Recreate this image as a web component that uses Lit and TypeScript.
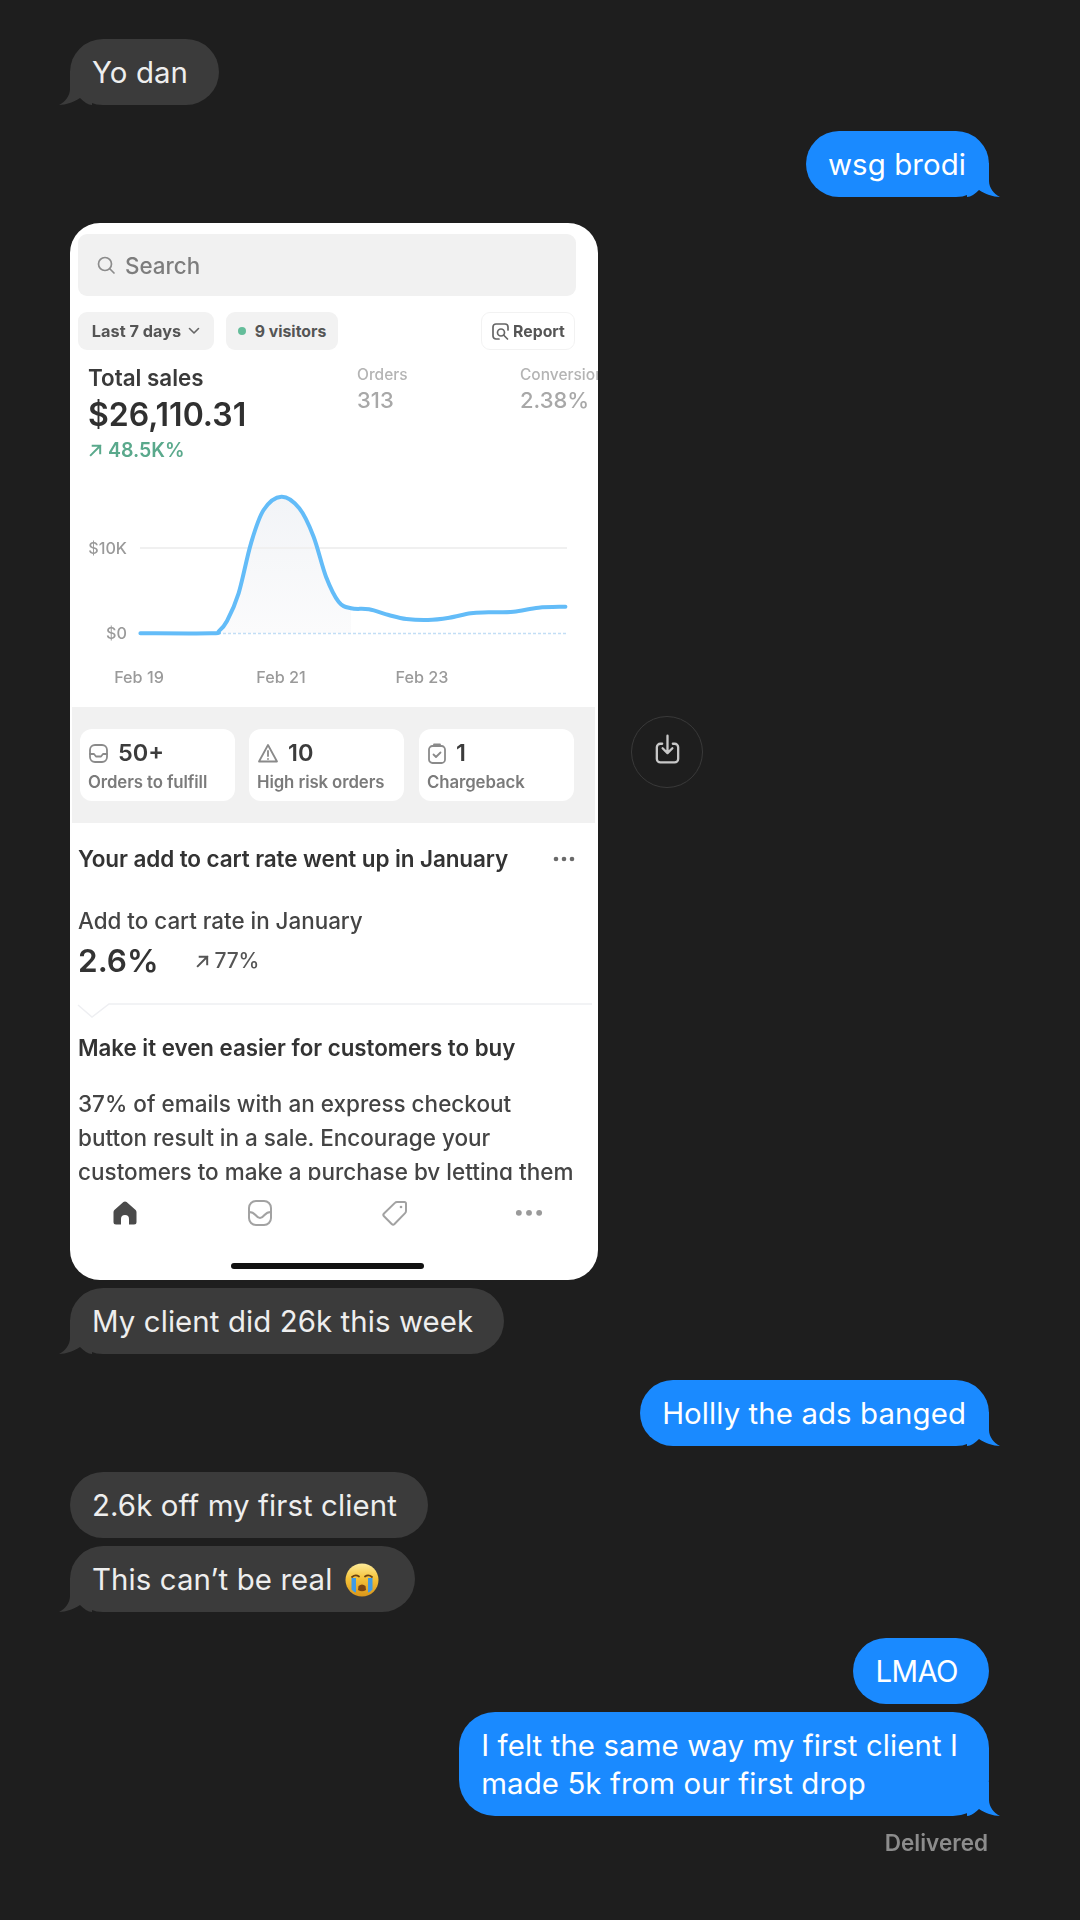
import { LitElement, html, css, svg } from "lit";
import { customElement } from "lit/decorators.js";

const PTS: [number, number][] = [
  [70.4,171.3],[141,171.3],[149,169],[157,159],[168.6,131.3],[181,81.3],[193.6,48],[211.4,34.7],[229.3,46.3],
  [243.6,74.7],[256,114.7],[268.6,139.7],[281,146.3],[299,147.3],[318.6,153],[336.4,157],[357.9,158],
  [379.3,155.7],[400.7,151.3],[418.6,150.3],[443.6,149.7],[468.6,145.7],[495.4,144.7],
];

function smooth(p: [number, number][]): string {
  let d = `M${p[0][0]} ${p[0][1]}`;
  for (let i = 0; i < p.length - 1; i++) {
    const a = p[Math.max(i - 1, 0)], b = p[i], c = p[i + 1], e = p[Math.min(i + 2, p.length - 1)];
    const c1x = b[0] + (c[0] - a[0]) / 6, c1y = b[1] + (c[1] - a[1]) / 6;
    const c2x = c[0] - (e[0] - b[0]) / 6, c2y = c[1] - (e[1] - b[1]) / 6;
    d += ` C${c1x.toFixed(1)} ${c1y.toFixed(1)} ${c2x.toFixed(1)} ${c2y.toFixed(1)} ${c[0]} ${c[1]}`;
  }
  return d;
}

const TAIL = "M11 0V18C11 25 6 31 0 34C7 34 15 31 21 27C25 31 29 34 33 34V0Z";
const tail = html`<svg class="tail" viewBox="0 0 33 34" width="33" height="34"><path d=${TAIL} fill="currentColor"/></svg>`;

const emoji = html`<svg class="emoji" viewBox="0 0 34 34" width="34" height="34">
  <defs><linearGradient id="ey" x1="0" y1="0" x2="0" y2="1"><stop offset="0" stop-color="#fdeb9a"/><stop offset="0.45" stop-color="#f5c33a"/><stop offset="1" stop-color="#d9961a"/></linearGradient></defs>
  <circle cx="17" cy="17" r="16.5" fill="url(#ey)"/>
  <path d="M7 14q3.500-3 7-.5M20 13.500q3.500-2.500 7 .5" fill="none" stroke="#6d4210" stroke-width="1.800" stroke-linecap="round"/>
  <path d="M13.500 23q3.500-3 7 0l.5 4q-4 2.500-8 0z" fill="#7a4512"/>
  <path d="M6.500 15h4.500v14.500q-2.500-.5-4.500-3zM23 15h4.500v11.500q-2 2.500-4.500 3z" fill="#3f9be6"/>
</svg>`;

const ic = {
  search: html`<svg class="i" width="20" height="20" viewBox="0 0 20 20" fill="none" stroke="#8c8c8c" stroke-width="1.700" stroke-linecap="round"><circle cx="9" cy="9" r="6.500"/><path d="M14 14l4 4"/></svg>`,
  chev: html`<svg width="12" height="8" viewBox="0 0 12 8" fill="none" stroke="#666" stroke-width="1.600" stroke-linecap="round" stroke-linejoin="round"><path d="M1.500 1.500L6 6l4.500-4.500"/></svg>`,
  report: html`<svg width="19" height="19" viewBox="0 0 19 19" fill="none" stroke="#666" stroke-width="1.700" stroke-linecap="round"><path d="M8 17H5a3 3 0 0 1-3-3V5a3 3 0 0 1 3-3h9a3 3 0 0 1 3 3v3"/><circle cx="10" cy="10.500" r="3.500"/><path d="M13 13.500l3.500 3.500"/></svg>`,
  up: (c: string, s: number) => html`<svg width=${s} height=${s} viewBox="0 0 16 16" fill="none" stroke=${c} stroke-width="2.100" stroke-linecap="square"><path d="M3 13L13 3M5 3h8v8"/></svg>`,
  inbox: html`<svg width="21" height="21" viewBox="0 0 21 21" fill="none" stroke="#8a8a8a" stroke-width="1.800" stroke-linecap="round" stroke-linejoin="round"><rect x="2" y="2" width="17" height="17" rx="5"/><path d="M2 11h4l2 2.500h5l2-2.500h4"/></svg>`,
  alert: html`<svg width="22" height="21" viewBox="0 0 22 21" fill="none" stroke="#8a8a8a" stroke-width="1.800" stroke-linecap="round" stroke-linejoin="round"><path d="M11 2L20 18.500H2zM11 8v5M11 15.800v.2"/></svg>`,
  clip: html`<svg width="20" height="23" viewBox="0 0 20 23" fill="none" stroke="#8a8a8a" stroke-width="1.800" stroke-linecap="round" stroke-linejoin="round"><rect x="2" y="4" width="16" height="17" rx="3.500"/><path d="M7 4V2.500h6V4M6.500 12.500l2.500 2.500 4.500-4.500"/></svg>`,
  dots: (c: string, w: number) => html`<svg width=${w} height=${w * 6 / 22} viewBox="0 0 22 6" fill=${c}><circle cx="3" cy="3" r="2.300"/><circle cx="11" cy="3" r="2.300"/><circle cx="19" cy="3" r="2.300"/></svg>`,
  home: html`<svg width="28" height="28" viewBox="0 0 28 28"><path d="M14 2.500a2.500 2.500 0 0 0-1.600.6L3.400 11A3 3 0 0 0 2.500 13.200V23a2.500 2.500 0 0 0 2.500 2.500h5V20a4 4 0 0 1 8 0v5.500h5a2.500 2.500 0 0 0 2.500-2.500V13.200a3 3 0 0 0-.9-2.200L15.600 3.100a2.500 2.500 0 0 0-1.600-.6z" fill="#4a4a4a"/></svg>`,
  navInbox: html`<svg width="28" height="28" viewBox="0 0 28 28" fill="none" stroke="#a2a2a2" stroke-width="2" stroke-linecap="round" stroke-linejoin="round"><rect x="3" y="2" width="22" height="24" rx="7"/><path d="M3 13q4 0 6.500 3t4.500 3q2 0 4.500-3t6.500-3"/></svg>`,
  tag: html`<svg width="28" height="28" viewBox="0 0 28 28" fill="none" stroke="#a2a2a2" stroke-width="2" stroke-linejoin="round"><path d="M16 3h7.500A1.500 1.500 0 0 1 25 4.500V12a3 3 0 0 1-.9 2.100L13.500 25a2 2 0 0 1-2.800 0L3 17.300a2 2 0 0 1 0-2.800L13.900 3.900A3 3 0 0 1 16 3z"/><circle cx="20" cy="8" r="1.300" fill="#a2a2a2" stroke="none"/></svg>`,
  save: html`<svg width="28" height="36" viewBox="0 0 28 36" fill="none" stroke="#c8c8c8" stroke-width="2.600" stroke-linecap="round" stroke-linejoin="round"><path d="M8 11H6a4 4 0 0 0-4 4v13a4 4 0 0 0 4 4h16a4 4 0 0 0 4-4V15a4 4 0 0 0-4-4h-2M14 2v19M8.500 16l5.500 5.500 5.500-5.500"/></svg>`,
};

@customElement("app-root")
export class AppRoot extends LitElement {
  static styles = css`
    :host { display: block; width: 1080px; height: 1920px; background: #1e1e1e; overflow: hidden; }
    .page { display: flex; flex-direction: column; padding: 39px 91px 0 70px; font-family: Inter, "Liberation Sans", sans-serif; filter: blur(0.5px); }
    .msg { display: flex; margin-top: 26px; }
    .msg:first-child { margin-top: 0; }
    .msg.tight { margin-top: 8px; }
    .msg.me { justify-content: flex-end; }
    .bubble { position: relative; font-size: 29.4px; letter-spacing: 0.1px; line-height: 38px; font-weight: 400; padding: 15px 31px 13px 22px; border-radius: 33px; background: #3b3b3b; color: #eeeeee; display: flex; align-items: center; box-sizing: border-box; min-height: 66px; white-space: nowrap; }
    .bubble.cry { padding-right: 36px; }
    .me .bubble { background: #1a8aff; color: #fff; padding-right: 23px; }
    .me .bubble.wide { padding-right: 31px; letter-spacing: -0.6px; }
    .me .bubble.multi { padding-right: 31px; border-radius: 36px; }
    .tail { position: absolute; left: -11px; bottom: 0; color: #3b3b3b; }
    .me .tail { left: auto; right: -11px; transform: scaleX(-1); color: #1a8aff; }
    .emoji { margin-left: 13px; }

    .row { display: flex; align-items: center; gap: 33px; margin-top: 26px; }
    .card { width: 528px; height: 1057px; background: #fff; border-radius: 30px; overflow: hidden; color: #303030; filter: blur(0.7px); flex: none; display: flex; flex-direction: column; }
    .save { width: 72px; height: 72px; border-radius: 50%; border: 1.500px solid #3a3a3a; box-sizing: border-box; display: flex; align-items: center; justify-content: center; }
    .save svg { width: 25px; height: 32px; margin-top: -4px; }

    .search { margin: 11px 22px 0 8px; height: 62px; flex: none; background: #f1f1f1; border-radius: 9px; display: flex; align-items: center; gap: 9px; padding-left: 18px; font-size: 22.400px; font-weight: 500; color: #7d7d7d; }
    .chips { display: flex; margin: 16px 23px 0 8px; gap: 12px; height: 38px; flex: none; font-size: 15.800px; font-weight: 700; color: #555; white-space: nowrap; }
    .chip { display: flex; align-items: center; justify-content: center; gap: 7px; background: #f2f2f2; border-radius: 9px; }
    .chip.days { width: 136px; font-size: 16.300px; }
    .chip.vis { width: 112px; gap: 9px; }
    .dot { width: 8px; height: 8px; border-radius: 50%; background: #64bd9a; }
    .chip.report { width: 94px; margin-left: auto; background: #fff; border: 1.500px solid #f2f2f2; box-sizing: border-box; gap: 3px; }
    .stats { display: flex; margin-top: 15px; padding-left: 18px; flex: none; height: 97px; white-space: nowrap; }
    .total { width: 269px; flex: none; }
    .t1 { font-size: 22.400px; line-height: 26px; font-weight: 600; color: #3a3a3a; }
    .t2 { font-size: 32px; line-height: 40px; font-weight: 600; margin-top: 4px; }
    .t3 { font-size: 19.500px; line-height: 24px; font-weight: 600; color: #5aa98c; display: flex; align-items: center; gap: 5px; margin-top: 3px; }
    .side { width: 163px; flex: none; color: #b4b4b4; }
    .s1 { font-size: 15.500px; line-height: 20px; font-weight: 500; }
    .s2 { font-size: 22px; line-height: 26px; font-weight: 500; margin-top: 2px; color: #a8a8a8; }
    .chart { display: block; flex: none; }
    .chart text { font-family: Inter, "Liberation Sans", sans-serif; font-size: 16.200px; fill: #9a9a9a; font-weight: 500; dominant-baseline: central; }

    .band { margin-left: 2px; width: 523px; height: 116px; flex: none; background: #f1f1f1; box-sizing: border-box; padding: 22px 0 0 8px; display: flex; gap: 14px; }
    .tile { width: 155px; height: 72px; background: #fff; border-radius: 12px; box-sizing: border-box; padding: 11px 0 0 8px; }
    .tile.last { margin-left: 1px; }
    .tv { display: flex; align-items: center; gap: 9px; font-size: 23.500px; line-height: 26px; font-weight: 600; color: #3c3c3c; }
    .tl { font-size: 16.800px; line-height: 20px; font-weight: 600; color: #7b7b7b; margin-top: 6px; letter-spacing: -0.1px; white-space: nowrap; }

    .copy { padding-left: 8px; color: #333; white-space: nowrap; }
    .head { display: flex; align-items: center; justify-content: space-between; margin-top: 22px; padding-right: 23px; font-size: 22.500px; line-height: 28px; font-weight: 600; letter-spacing: -0.1px; }
    .lab { margin-top: 35px; font-size: 22.400px; line-height: 26px; font-weight: 500; color: #444; }
    .big { display: flex; align-items: center; margin-top: 7px; font-size: 31.500px; line-height: 40px; font-weight: 600; height: 40px; }
    .delta { display: flex; align-items: center; gap: 3px; margin-left: 36px; font-size: 21px; font-weight: 500; color: #555; letter-spacing: -0.3px; }
    .delta span { margin-left: 2px; }
    .div { display: block; margin-top: 21px; flex: none; }
    .mk { margin-top: 14px; font-size: 22.300px; line-height: 28px; font-weight: 600; }
    .body { margin-top: 25px; height: 93px; overflow: hidden; font-size: 22.500px; line-height: 34px; font-weight: 500; color: #444; }
    .nav { display: flex; align-items: center; gap: 107px; height: 66px; flex: none; padding-left: 41px; }
    .navdots { display: flex; margin: -1px 0 0 -1px; }
    .ind { width: 193px; height: 6px; flex: none; border-radius: 3px; background: #111; margin: 17px 0 0 161px; }

    .delivered { align-self: flex-end; margin: 14px 1px 0 0; font-size: 22.500px; line-height: 26px; font-weight: 600; color: #8c8c8c; }
  `;

  private msg(text: unknown, me: boolean, opts: { tail?: boolean; tight?: boolean; cls?: string } = {}) {
    return html`<div class="msg ${me ? "me" : ""} ${opts.tight ? "tight" : ""}">
      <div class="bubble ${opts.cls ?? ""}">${text}${opts.tail ? tail : ""}</div>
    </div>`;
  }

  private chart() {
    const line = smooth(PTS);
    const area = smooth(PTS.slice(1, 13)) + " V171 H141 Z";
    return html`<svg class="chart" width="528" height="245" viewBox="0 0 528 245">
      ${svg`
        <defs><linearGradient id="ar" x1="0" y1="0" x2="0" y2="1"><stop offset="0" stop-color="#f2f4f7"/><stop offset="1" stop-color="#fbfbfc"/></linearGradient></defs>
        <path d=${area} fill="url(#ar)"/>
        <path d="M70 86H497" stroke="#f0f0f0" stroke-width="2"/>
        <path d="M143 171.500H497" stroke="#c3def5" stroke-width="1.500" stroke-dasharray="3 2"/>
        <path d=${line} fill="none" stroke="#63bcf8" stroke-width="4" stroke-linecap="round" stroke-linejoin="round"/>
        <text x="57" y="86" text-anchor="end">$10K</text>
        <text x="57" y="171" text-anchor="end">$0</text>
        <text x="69" y="215" text-anchor="middle">Feb 19</text>
        <text x="211" y="215" text-anchor="middle">Feb 21</text>
        <text x="352" y="215" text-anchor="middle">Feb 23</text>
      `}
    </svg>`;
  }

  private card() {
    return html`<div class="card">
      <div class="search">${ic.search}<span>Search</span></div>
      <div class="chips">
        <div class="chip days"><span>Last 7 days</span>${ic.chev}</div>
        <div class="chip vis"><span class="dot"></span><span>9 visitors</span></div>
        <div class="chip report">${ic.report}<span>Report</span></div>
      </div>
      <div class="stats">
        <div class="total">
          <div class="t1">Total sales</div>
          <div class="t2">$26,110.31</div>
          <div class="t3">${ic.up("#5aa98c", 15)}<span>48.5K%</span></div>
        </div>
        <div class="side"><div class="s1">Orders</div><div class="s2">313</div></div>
        <div class="side"><div class="s1">Conversion</div><div class="s2">2.38%</div></div>
      </div>
      ${this.chart()}
      <div class="band">
        <div class="tile"><div class="tv">${ic.inbox}<span>50+</span></div><div class="tl">Orders to fulfill</div></div>
        <div class="tile"><div class="tv">${ic.alert}<span>10</span></div><div class="tl">High risk orders</div></div>
        <div class="tile last"><div class="tv">${ic.clip}<span>1</span></div><div class="tl">Chargeback</div></div>
      </div>
      <div class="copy">
        <div class="head"><span>Your add to cart rate went up in January</span>${ic.dots("#6a6a6a", 22)}</div>
        <div class="lab">Add to cart rate in January</div>
        <div class="big"><span>2.6%</span><span class="delta">${ic.up("#555", 15)}<span>77%</span></span></div>
      </div>
      <svg class="div" width="528" height="18" viewBox="0 0 528 18" fill="none" stroke="#eeeff2" stroke-width="1.500">
        <path d="M8 3l14 12 17-13H522"/>
      </svg>
      <div class="copy">
        <div class="mk">Make it even easier for customers to buy</div>
        <div class="body">37% of emails with an express checkout<br />button result in a sale. Encourage your<br />customers to make a purchase by letting them</div>
      </div>
      <div class="nav">${ic.home}${ic.navInbox}${ic.tag}<span class="navdots">${ic.dots("#9a9a9a", 28)}</span></div>
      <div class="ind"></div>
    </div>`;
  }

  render() {
    return html`<div class="page">
      ${this.msg("Yo dan", false, { tail: true })}
      ${this.msg("wsg brodi", true, { tail: true })}
      <div class="row">${this.card()}<div class="save">${ic.save}</div></div>
      ${this.msg("My client did 26k this week", false, { tail: true, tight: true })}
      ${this.msg("Hollly the ads banged", true, { tail: true })}
      ${this.msg("2.6k off my first client", false)}
      ${this.msg(html`<span>This can’t be real</span>${emoji}`, false, { tail: true, tight: true, cls: "cry" })}
      ${this.msg("LMAO", true, { cls: "wide" })}
      ${this.msg(html`<span>I felt the same way my first client I<br />made 5k from our first drop</span>`, true, { tail: true, tight: true, cls: "multi" })}
      <div class="delivered">Delivered</div>
    </div>`;
  }
}
